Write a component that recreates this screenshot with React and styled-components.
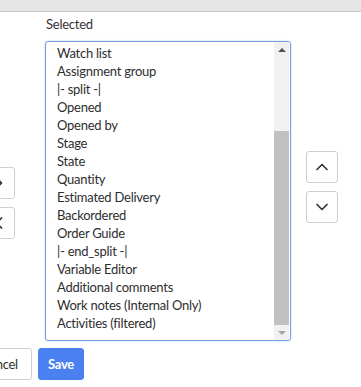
import React from 'react';
import styled, { createGlobalStyle } from 'styled-components';
import { ChevronUp, ChevronDown, ChevronLeft, ChevronRight } from 'lucide-react';

const GlobalStyle = createGlobalStyle`
  html, body {
    margin: 0;
    padding: 0;
    background: #fff;
    overflow: hidden;
  }
  body {
    font-family: Lato, "Open Sans", sans-serif;
    font-size: 13px;
    letter-spacing: -0.25px;
    color: #2e2e2e;
  }
`;

const TopBar = styled.div`
  height: 11px;
  background: #e6e6e6;
  border-bottom: 1px solid #c8c8c8;
`;

const Main = styled.div`
  display: flex;
  align-items: flex-start;
  margin-left: -17px;
`;

const ButtonStack = styled.div`
  display: flex;
  flex-direction: column;
  gap: 8px;
  padding-top: ${(p) => p.$top}px;
  margin-left: ${(p) => p.$left || 0}px;
  margin-right: ${(p) => p.$right || 0}px;
`;

const IconButton = styled.button`
  width: 32px;
  height: 32px;
  padding: 0;
  display: flex;
  align-items: center;
  justify-content: center;
  background: #fff;
  border: 1px solid #cfcfcf;
  border-radius: 3px;
  color: #333;
`;

const Column = styled.div`
  width: 246px;
  display: flex;
  flex-direction: column;
  padding-top: 3px;
`;

const Label = styled.div`
  line-height: 18px;
  padding-left: 1px;
  margin-bottom: 8px;
  color: #333;
`;

const ListBox = styled.div`
  height: 300px;
  box-sizing: border-box;
  display: flex;
  border: 1px solid #7b9fdd;
  border-radius: 3px;
  box-shadow: 0 0 2px rgba(80, 130, 220, 0.45);
  overflow: hidden;
`;

const Items = styled.div`
  flex: 1;
  display: flex;
  flex-direction: column;
  justify-content: flex-end;
  overflow: hidden;
  padding: 0 0 8px 11px;
`;

const Item = styled.div`
  line-height: 18px;
  white-space: nowrap;
  flex-shrink: 0;
`;

const Scrollbar = styled.div`
  width: 15px;
  margin-right: 1px;
  display: flex;
  flex-direction: column;
  background: #f1f1f1;
`;

const Arrow = styled.div`
  height: 15px;
  display: flex;
  align-items: center;
  justify-content: center;
  &::before {
    content: '';
    border-left: 4px solid transparent;
    border-right: 4px solid transparent;
    ${(p) =>
      p.$dir === 'up'
        ? 'border-bottom: 4px solid #505050;'
        : 'border-top: 4px solid #a3a3a3;'}
  }
`;

const Track = styled.div`
  flex: 1;
  display: flex;
  flex-direction: column;
  justify-content: flex-end;
`;

const Thumb = styled.div`
  height: 194px;
  background: #c1c1c1;
`;

const Footer = styled.div`
  display: flex;
  gap: 6px;
  margin: 7px 0 0 -33px;
`;

const Button = styled.button`
  height: 32px;
  box-sizing: border-box;
  padding: 0 ${(p) => (p.$primary ? 9 : 13)}px;
  font-family: Lato, "Open Sans", sans-serif;
  font-size: 13px;
  letter-spacing: -0.25px;
  font-weight: ${(p) => (p.$primary ? 700 : 400)};
  border-radius: 3px;
  border: 1px solid ${(p) => (p.$primary ? '#4a80f0' : '#cfcfcf')};
  background: ${(p) => (p.$primary ? '#4a80f0' : '#fff')};
  color: ${(p) => (p.$primary ? '#fff' : '#2e2e2e')};
`;

// scrolled to the bottom: only the tail of the list is in view
const selected = [
  'Assigned to',
  'Watch list',
  'Assignment group',
  '|- split -|',
  'Opened',
  'Opened by',
  'Stage',
  'State',
  'Quantity',
  'Estimated Delivery',
  'Backordered',
  'Order Guide',
  '|- end_split -|',
  'Variable Editor',
  'Additional comments',
  'Work notes (Internal Only)',
  'Activities (filtered)',
];

export default function App() {
  return (
    <>
      <GlobalStyle />
      <TopBar />
      <Main>
        <ButtonStack $top={155} $right={30}>
          <IconButton><ChevronRight size={20} strokeWidth={2} /></IconButton>
          <IconButton><ChevronLeft size={20} strokeWidth={2} /></IconButton>
        </ButtonStack>
        <Column>
          <Label>Selected</Label>
          <ListBox>
            <Items>
              {selected.map((s, i) => (
                <Item key={i}>{s}</Item>
              ))}
            </Items>
            <Scrollbar>
              <Arrow $dir="up" />
              <Track>
                <Thumb />
              </Track>
              <Arrow $dir="down" />
            </Scrollbar>
          </ListBox>
        </Column>
        <ButtonStack $top={139} $left={15}>
          <IconButton><ChevronUp size={20} strokeWidth={2} /></IconButton>
          <IconButton><ChevronDown size={20} strokeWidth={2} /></IconButton>
        </ButtonStack>
      </Main>
      <Footer>
        <Button>Cancel</Button>
        <Button $primary>Save</Button>
      </Footer>
    </>
  );
}
